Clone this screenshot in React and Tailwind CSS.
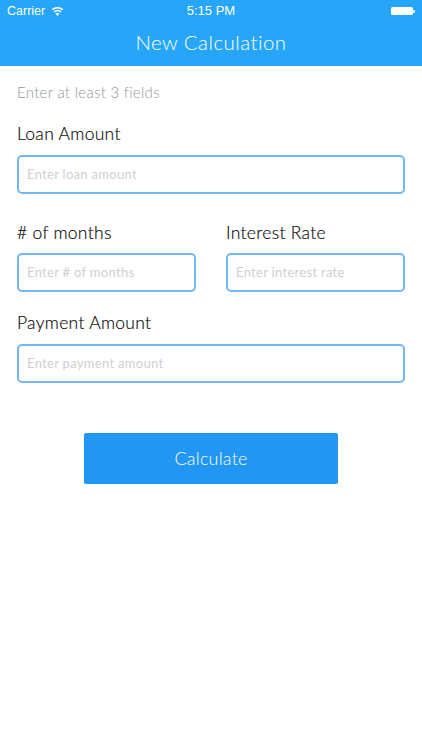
function Field({ label, placeholder, className = "", gap = "mt-[10px]" }) {
  return (
    <div className={className}>
      <div className="h-[22px] text-[17.5px] leading-[22px] text-[#111111] font-[Lato,sans-serif] font-light tracking-[0.3px] [-webkit-text-stroke:0.2px_#111111]">{label}</div>
      <div className={`${gap} h-[39px] rounded-[5px] border-2 border-[#74b7ef] px-[8px] flex items-center text-[13px] text-[#cfcfd3] font-[Lato,sans-serif] tracking-[0.3px]`}>
        {placeholder}
      </div>
    </div>
  );
}

export default function App() {
  return (
    <div className="w-[422px] h-[750px] bg-white overflow-hidden">
      {/* Header */}
      <div className="h-[66px] bg-[#27a6f9] text-white px-[7px]">
        <div className="h-[22px] flex items-center justify-between text-[12.5px] font-['Liberation_Sans',sans-serif]">
          <div className="w-[120px] flex items-center gap-[6px]">
            <span>Carrier</span>
            <svg width="13" height="10" viewBox="0 0 12 9" fill="white">
              <path d="M6 9 L4.1 6.8 A3 3 0 0 1 7.9 6.8 Z" />
              <path d="M3.3 5.9 L2.4 4.8 A5.6 5.6 0 0 1 9.6 4.8 L8.7 5.9 A4.2 4.2 0 0 0 3.3 5.9 Z" />
              <path d="M1.6 3.9 L0.6 2.8 A8.2 8.2 0 0 1 11.4 2.8 L10.4 3.9 A6.8 6.8 0 0 0 1.6 3.9 Z" />
            </svg>
          </div>
          <span className="text-[13px] font-medium">5:15 PM</span>
          <div className="w-[120px] flex justify-end items-center">
            <div className="w-[22px] h-[8px] rounded-[1.5px] bg-white" />
            <div className="w-[1.5px] h-[3px] bg-white/80" />
          </div>
        </div>
        <div className="mt-[7px] text-center text-[20.5px] leading-[26px] font-light tracking-[0.45px] font-[Lato,sans-serif] text-white">
          New Calculation
        </div>
      </div>

      {/* Form */}
      <div className="px-[17px]">
        <div className="mt-[17px] h-[18px] text-[15px] leading-[18px] font-light text-[#969696] font-[Lato,sans-serif] tracking-[0.3px]">
          Enter at least 3 fields
        </div>
        <Field className="mt-[22px]" label="Loan Amount" placeholder="Enter loan amount" />
        <div className="mt-[28px] flex gap-[30px]">
          <Field className="flex-1" gap="mt-[9px]" label="# of months" placeholder="Enter # of months" />
          <Field className="flex-1" gap="mt-[9px]" label="Interest Rate" placeholder="Enter interest rate" />
        </div>
        <Field className="mt-[20px]" label="Payment Amount" placeholder="Enter payment amount" />
        <div className="mt-[50px] flex justify-center">
          <button className="w-[254px] h-[51px] rounded-[2px] bg-[#2196f3] text-white text-[18px] tracking-[0.2px] font-[Lato,sans-serif] font-light">
            Calculate
          </button>
        </div>
      </div>
    </div>
  );
}
